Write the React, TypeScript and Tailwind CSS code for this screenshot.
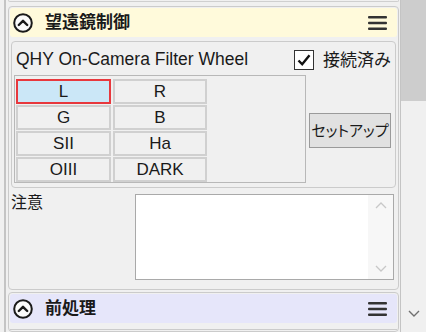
import React from 'react';

const font = { fontFamily: '"Liberation Sans", "Noto Sans CJK JP", sans-serif' };

const CollapseIcon = () => (
  <svg width="20" height="20" viewBox="0 0 20 20" className="shrink-0">
    <circle cx="10" cy="10" r="8.8" fill="#fbfbfb" stroke="#1a1a1a" strokeWidth="2" />
    <path d="M5.8 12 L10 7.8 L14.2 12" fill="none" stroke="#1a1a1a" strokeWidth="2.4" strokeLinecap="round" strokeLinejoin="round" />
  </svg>
);

const MenuIcon = () => (
  <svg width="19" height="16" viewBox="0 0 19 16" className="shrink-0">
    <rect x="0" y="1" width="19" height="2.6" rx="1" fill="#333" />
    <rect x="0" y="6.7" width="19" height="2.6" rx="1" fill="#333" />
    <rect x="0" y="12.4" width="19" height="2.6" rx="1" fill="#333" />
  </svg>
);

type PanelHeaderProps = {
  title: string;
  bg: string;
};

const PanelHeader = ({ title, bg }: PanelHeaderProps) => (
  <div className={`h-[29px] rounded-[3px] flex items-center pl-[3px] pr-[10px] ${bg}`}>
    <CollapseIcon />
    <span className="ml-[12px] text-[17px] font-bold text-[#1a1a1a] leading-none">{title}</span>
    <div className="flex-1" />
    <MenuIcon />
  </div>
);

const filters = ['L', 'R', 'G', 'B', 'SII', 'Ha', 'OIII', 'DARK'];

const App = () => {
  return (
    <div className="w-[426px] h-[332px] bg-[#f0f0f0] flex overflow-hidden text-[#1a1a1a]" style={font}>
      {/* main content */}
      <div className="w-[401px] h-full pl-[4px]">
        <div className="h-full border-l-2 border-r border-[#c4c4c4] pl-[2px] pr-[1px] flex flex-col">
          {/* bottom of previous panel */}
          <div className="h-[3px] border-b border-x border-[#cfcfcf] rounded-b-[4px]" />

          {/* 望遠鏡制御 panel */}
          <div className="mt-[4px] border border-[#cbcbcb] rounded-[4px] p-[1px] pb-[2px]">
            <PanelHeader title="望遠鏡制御" bg="bg-[#fffadb]" />

            <div className="mt-[4px] ml-[1px] mr-[1px] border border-[#cbcbcb] rounded-[4px] pl-[2px] pb-[4px]">
              <div className="h-[33px] flex items-center">
                <span className="ml-[2px] text-[17.5px] leading-none mt-[3px]">QHY On-Camera Filter Wheel</span>
                <div className="flex-1" />
                <div className="w-[20px] h-[20px] border border-[#333] bg-white flex items-center justify-center mt-[2px]">
                  <svg width="16" height="16" viewBox="0 0 16 16">
                    <path d="M2.5 8.5 L6.2 12.3 L13.5 3.2" fill="none" stroke="#111" strokeWidth="2.4" />
                  </svg>
                </div>
                <span className="ml-[9px] mr-[4px] text-[17px] leading-none mt-[3px]">接続済み</span>
              </div>

              <div className="flex items-start">
                <div className="w-[292px] h-[108px] border border-[#b8b8b8] pl-[1px] pt-[3px]">
                  <div className="grid grid-cols-[95px_94px] gap-x-[2px] gap-y-[1px]">
                    {filters.map((f, i) => (
                      <div
                        key={f}
                        className={
                          i === 0
                            ? 'h-[25px] border-2 border-[#e8383d] bg-[#cbe7f7] flex items-center justify-center text-[17px]'
                            : 'h-[25px] border-2 border-[#d0d0d0] bg-[#f0f0f0] flex items-center justify-center text-[17px]'
                        }
                      >
                        {f}
                      </div>
                    ))}
                  </div>
                </div>
                <button className="ml-[3px] mt-[38px] w-[82px] h-[35px] bg-[#e1e1e1] border border-[#9a9a9a] text-[15px] leading-none whitespace-nowrap flex items-center justify-center [font-feature-settings:'palt']">
                  セットアップ
                </button>
              </div>
            </div>

            {/* 注意 */}
            <div className="flex mt-[6px] h-[93px]">
              <span className="ml-[1px] mt-[1px] text-[16px] leading-none">注意</span>
              <div className="ml-[92px] w-[259px] h-[86px] border border-[#a9a9a9] bg-white flex">
                <div className="flex-1" />
                <div className="w-[25px] bg-[#f7f7f7] flex flex-col items-center justify-between py-[6px]">
                  <svg width="12" height="8" viewBox="0 0 12 8">
                    <path d="M1 7 L6 2 L11 7" fill="none" stroke="#c8c8c8" strokeWidth="1.3" />
                  </svg>
                  <svg width="12" height="8" viewBox="0 0 12 8">
                    <path d="M1 1 L6 6 L11 1" fill="none" stroke="#c8c8c8" strokeWidth="1.3" />
                  </svg>
                </div>
              </div>
            </div>
          </div>

          {/* 前処理 panel */}
          <div className="mt-[2px] border border-[#cbcbcb] rounded-[4px] p-[1px] flex-1">
            <PanelHeader title="前処理" bg="bg-[#e6e6fa]" />
            <div className="mt-[6px] border-t border-[#cbcbcb]" />
          </div>
        </div>
      </div>

      {/* scrollbar */}
      <div className="w-[25px] h-full flex flex-col">
        <div className="h-[101px] bg-[#cdcdcd]" />
        <div className="flex-1" />
        <div className="h-[22px] flex items-start justify-center">
          <svg width="12" height="8" viewBox="0 0 12 8">
            <path d="M1 1 L6 6 L11 1" fill="none" stroke="#707070" strokeWidth="1.4" />
          </svg>
        </div>
      </div>
    </div>
  );
};

export default App;
